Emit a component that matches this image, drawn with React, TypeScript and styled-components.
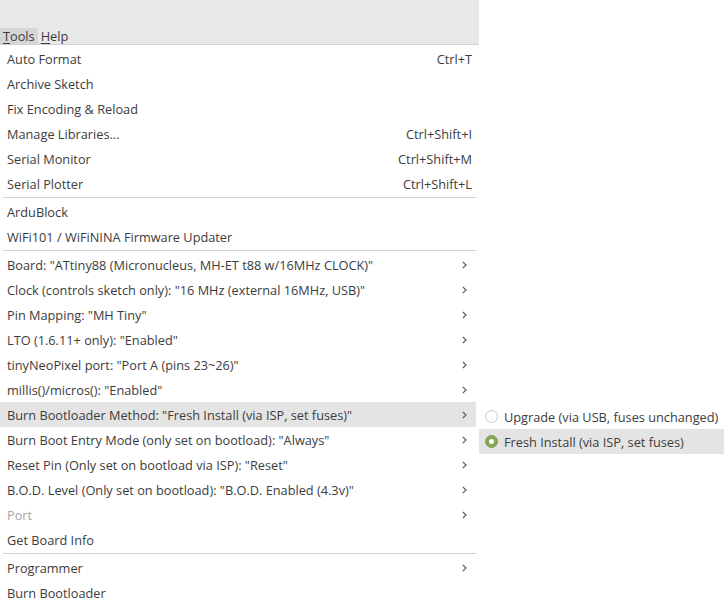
import React from 'react';
import styled, { createGlobalStyle } from 'styled-components';

const GlobalStyle = createGlobalStyle`
  html, body {
    margin: 0;
    padding: 0;
    background: #ffffff;
  }
  body {
    font-family: "Open Sans", "Liberation Sans", sans-serif;
    font-size: 12.75px;
    color: #3c3c3c;
  }
`;

type Entry =
  | { kind: 'item'; label: string; shortcut?: string; sub?: boolean; disabled?: boolean; active?: boolean }
  | { kind: 'sep' };

const entries: Entry[] = [
  { kind: 'item', label: 'Auto Format', shortcut: 'Ctrl+T' },
  { kind: 'item', label: 'Archive Sketch' },
  { kind: 'item', label: 'Fix Encoding & Reload' },
  { kind: 'item', label: 'Manage Libraries...', shortcut: 'Ctrl+Shift+I' },
  { kind: 'item', label: 'Serial Monitor', shortcut: 'Ctrl+Shift+M' },
  { kind: 'item', label: 'Serial Plotter', shortcut: 'Ctrl+Shift+L' },
  { kind: 'sep' },
  { kind: 'item', label: 'ArduBlock' },
  { kind: 'item', label: 'WiFi101 / WiFiNINA Firmware Updater' },
  { kind: 'sep' },
  { kind: 'item', label: 'Board: "ATtiny88 (Micronucleus, MH-ET t88 w/16MHz CLOCK)"', sub: true },
  { kind: 'item', label: 'Clock (controls sketch only): "16 MHz (external 16MHz, USB)"', sub: true },
  { kind: 'item', label: 'Pin Mapping: "MH Tiny"', sub: true },
  { kind: 'item', label: 'LTO (1.6.11+ only): "Enabled"', sub: true },
  { kind: 'item', label: 'tinyNeoPixel port: "Port A (pins 23~26)"', sub: true },
  { kind: 'item', label: 'millis()/micros(): "Enabled"', sub: true },
  { kind: 'item', label: 'Burn Bootloader Method: "Fresh Install (via ISP, set fuses)"', sub: true, active: true },
  { kind: 'item', label: 'Burn Boot Entry Mode (only set on bootload): "Always"', sub: true },
  { kind: 'item', label: 'Reset Pin (Only set on bootload via ISP): "Reset"', sub: true },
  { kind: 'item', label: 'B.O.D. Level (Only set on bootload): "B.O.D. Enabled (4.3v)"', sub: true },
  { kind: 'item', label: 'Port', sub: true, disabled: true },
  { kind: 'item', label: 'Get Board Info' },
  { kind: 'sep' },
  { kind: 'item', label: 'Programmer', sub: true },
  { kind: 'item', label: 'Burn Bootloader' },
];

const methods = [
  { label: 'Upgrade (via USB, fuses unchanged)', checked: false },
  { label: 'Fresh Install (via ISP, set fuses)', checked: true },
];

const Page = styled.div`
  display: flex;
  align-items: flex-start;
`;

const Window = styled.div`
  width: 479px;
  display: flex;
  flex-direction: column;
`;

const TitleArea = styled.div`
  height: 28px;
  background: #e8e8e8;
`;

const MenuBar = styled.div`
  height: 16px;
  display: flex;
  background: #e8e8e8;
  border-bottom: 1px solid #d2d2d2;
`;

const MenuTitle = styled.div<{ $open?: boolean }>`
  padding: 0 3px;
  line-height: 16px;
  background: ${(p) => (p.$open ? '#d6d6d6' : 'transparent')};
  color: #3c3c3c;

  u {
    text-decoration: underline;
    text-underline-offset: 2px;
  }
`;

const DropMenu = styled.div`
  background: #ffffff;
  padding-top: 1px;
  display: flex;
  flex-direction: column;
`;

const Row = styled.div<{ $active?: boolean; $disabled?: boolean }>`
  position: relative;
  height: 25px;
  display: flex;
  align-items: center;
  padding: 0 4px 0 7px;
  margin-right: 3px;
  background: ${(p) => (p.$active ? '#e4e4e4' : 'transparent')};
  color: ${(p) => (p.$disabled ? '#a6a6a6' : '#3c3c3c')};
  white-space: nowrap;
`;

const Label = styled.span`
  flex: 1;
`;

const Shortcut = styled.span`
  color: #3c3c3c;
`;

const Chevron = styled.svg`
  width: 5px;
  height: 8px;
  margin-right: 5px;
`;

const Separator = styled.div`
  height: 1px;
  margin: 1px 3px 1px 3px;
  background: #d2d2d2;
`;

const SubMenu = styled.div`
  position: absolute;
  top: 0;
  left: 479px;
  width: 245px;
  padding-top: 2px;
  background: #ffffff;
  display: flex;
  flex-direction: column;
`;

const SubRow = styled.div<{ $active?: boolean }>`
  height: 25px;
  display: flex;
  align-items: center;
  gap: 6px;
  padding-left: 6px;
  background: ${(p) => (p.$active ? '#e4e4e4' : 'transparent')};
  color: #3c3c3c;
  white-space: nowrap;
`;

const Radio = styled.span<{ $checked?: boolean }>`
  width: 13px;
  height: 13px;
  box-sizing: border-box;
  border-radius: 50%;
  display: inline-flex;
  align-items: center;
  justify-content: center;
  border: 1px solid ${(p) => (p.$checked ? '#7ea14f' : '#c9c9c9')};
  background: ${(p) => (p.$checked ? '#87a752' : '#ffffff')};

  &::after {
    content: '';
    width: 5px;
    height: 5px;
    border-radius: 50%;
    background: #ffffff;
    display: ${(p) => (p.$checked ? 'block' : 'none')};
  }
`;

const ArrowIcon = () => (
  <Chevron viewBox="0 0 5 8">
    <path d="M0.8 0.8 L4 4 L0.8 7.2" fill="none" stroke="#5a5a5a" strokeWidth="1.2" />
  </Chevron>
);

export default function App() {
  return (
    <Page>
      <GlobalStyle />
      <Window>
        <TitleArea />
        <MenuBar>
          <MenuTitle $open>
            <u>T</u>ools
          </MenuTitle>
          <MenuTitle>
            <u>H</u>elp
          </MenuTitle>
        </MenuBar>
        <DropMenu>
          {entries.map((e, i) =>
            e.kind === 'sep' ? (
              <Separator key={i} />
            ) : (
              <Row key={i} $active={e.active} $disabled={e.disabled}>
                <Label>{e.label}</Label>
                {e.shortcut && <Shortcut>{e.shortcut}</Shortcut>}
                {e.sub && <ArrowIcon />}
                {e.active && (
                  <SubMenu>
                    {methods.map((m) => (
                      <SubRow key={m.label} $active={m.checked}>
                        <Radio $checked={m.checked} />
                        {m.label}
                      </SubRow>
                    ))}
                  </SubMenu>
                )}
              </Row>
            )
          )}
        </DropMenu>
      </Window>
    </Page>
  );
}
